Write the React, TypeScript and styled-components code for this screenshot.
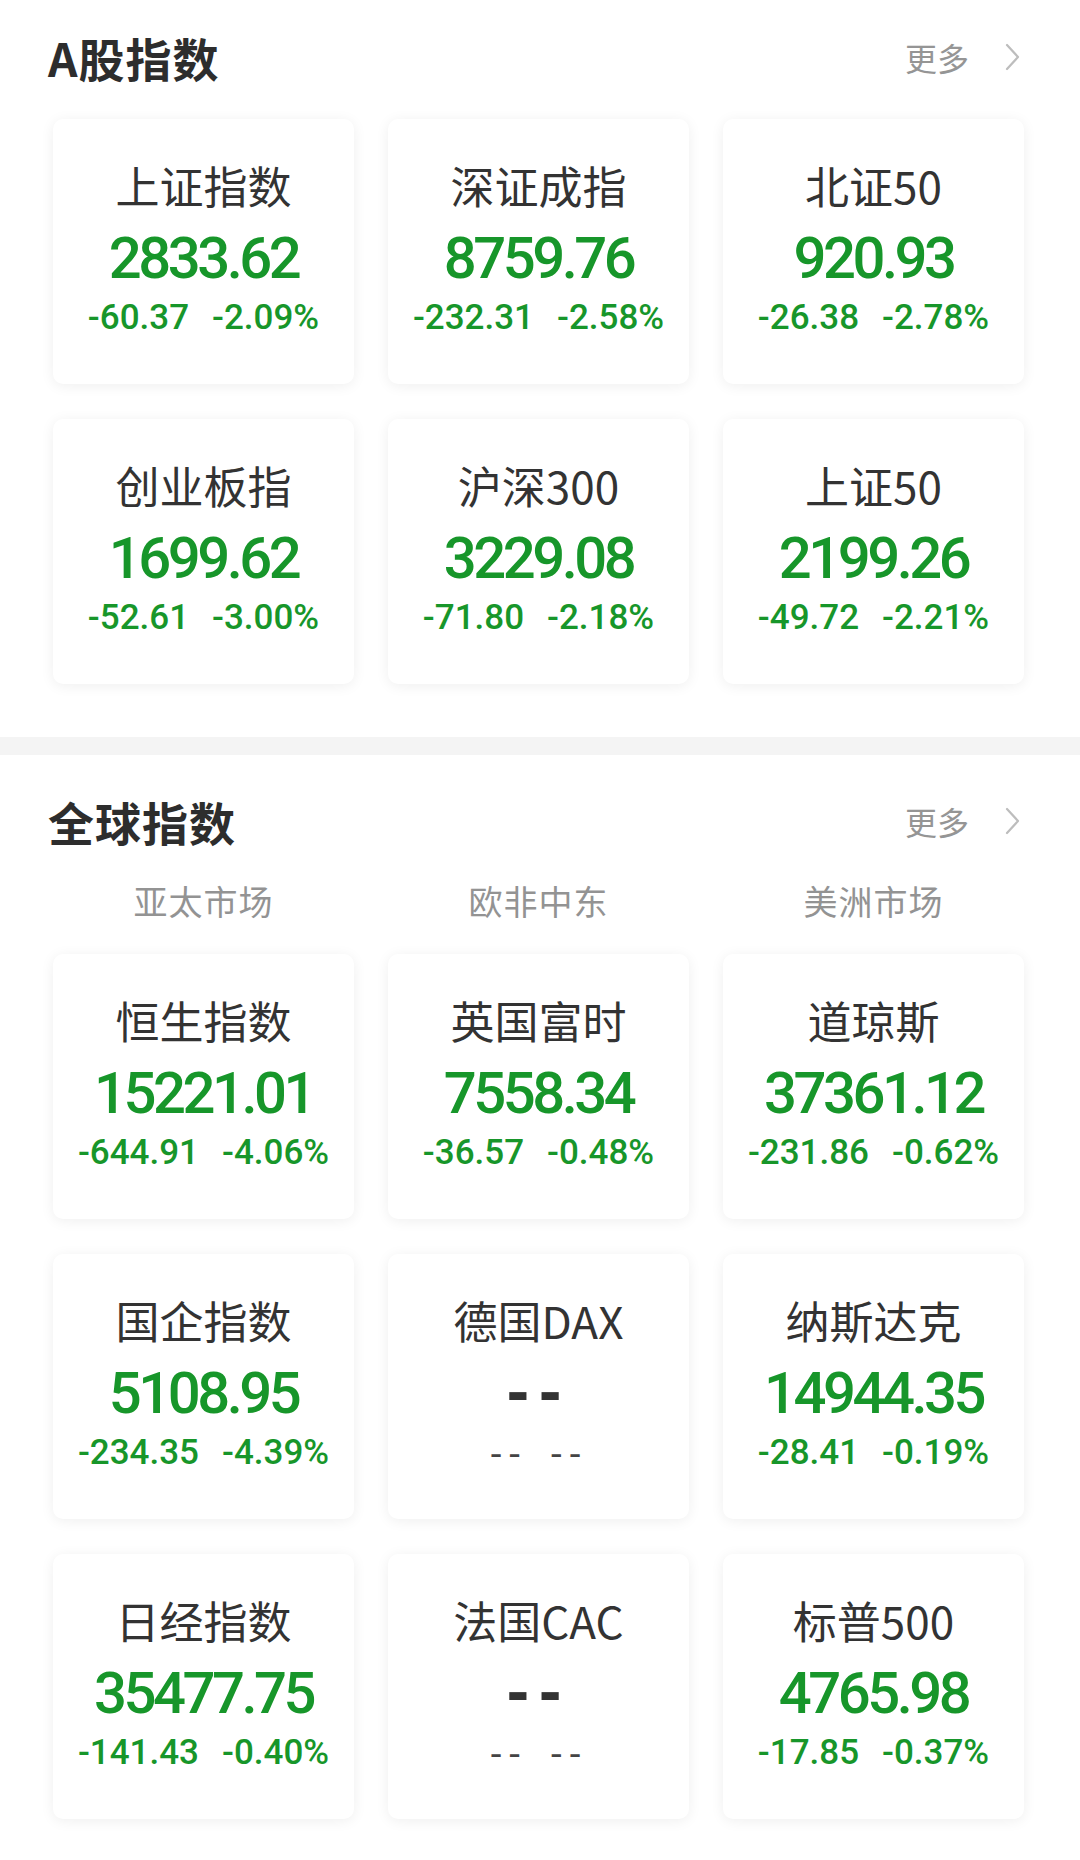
import React from 'react';
import styled, { createGlobalStyle } from 'styled-components';

const GlobalStyle = createGlobalStyle`
    html, body {
        margin: 0;
        padding: 0;
        background: #fff;
    }
    body {
        font-family: Roboto, "Noto Sans CJK SC", sans-serif;
        -webkit-font-smoothing: antialiased;
    }
`;

const Page = styled.div`
    width: 1080px;
    height: 1860px;
    background: #fff;
    overflow: hidden;
`;

const Section = styled.section<{ $top: number; $bottom: number }>`
    padding: ${(p) => p.$top}px 56px ${(p) => p.$bottom}px 53px;
`;

const Header = styled.div`
    display: flex;
    align-items: center;
    justify-content: space-between;
    height: 54px;
    margin: 0 3px 0 -5px;
`;

const Title = styled.h2`
    margin: 0;
    font-family: "Noto Sans CJK SC", sans-serif;
    font-size: 46px;
    line-height: 54px;
    font-weight: 700;
    color: #2d2d2d;
    letter-spacing: 1px;
`;

const More = styled.div`
    display: flex;
    align-items: center;
    gap: 36px;
    font-family: "Noto Sans CJK SC", sans-serif;
    font-size: 32px;
    color: #959595;
`;

const Divider = styled.div`
    height: 18px;
    background: #f4f4f4;
`;

const Tabs = styled.div`
    display: grid;
    grid-template-columns: repeat(3, 1fr);
    column-gap: 34px;
    margin-top: 33px;
`;

const Tab = styled.div`
    text-align: center;
    font-family: "Noto Sans CJK SC", sans-serif;
    font-size: 34px;
    line-height: 40px;
    color: #939393;
    letter-spacing: 1px;
`;

const Grid = styled.div<{ $mt: number }>`
    display: grid;
    grid-template-columns: repeat(3, 1fr);
    column-gap: 34px;
    row-gap: 35px;
    margin-top: ${(p) => p.$mt}px;
`;

const Card = styled.div`
    box-sizing: border-box;
    height: 265px;
    padding-top: 40px;
    background: #fff;
    border-radius: 10px;
    box-shadow: 0 2px 14px rgba(0, 0, 0, 0.065);
    display: flex;
    flex-direction: column;
    align-items: center;
`;

const Name = styled.div`
    font-family: "Noto Sans CJK SC", sans-serif;
    font-size: 44px;
    line-height: 52px;
    color: #333;
    white-space: nowrap;
`;

const Value = styled.div<{ $empty?: boolean }>`
    margin-top: 15px;
    font-family: ${(p) => (p.$empty ? '"DejaVu Sans", sans-serif' : 'Roboto, sans-serif')};
    font-size: ${(p) => (p.$empty ? '56px' : '58px')};
    line-height: 64px;
    font-weight: ${(p) => (p.$empty ? 700 : 500)};
    letter-spacing: ${(p) => (p.$empty ? '9px' : '-3.5px')};
    color: ${(p) => (p.$empty ? '#333' : '#17962a')};
    white-space: nowrap;
`;

const Change = styled.div<{ $empty?: boolean }>`
    margin-top: 8px;
    display: flex;
    gap: 23px;
    font-family: ${(p) => (p.$empty ? '"DejaVu Sans", sans-serif' : 'Roboto, sans-serif')};
    font-size: 35px;
    line-height: 40px;
    font-weight: ${(p) => (p.$empty ? 400 : 500)};
    letter-spacing: ${(p) => (p.$empty ? '6px' : '0')};
    color: ${(p) => (p.$empty ? '#444' : '#17962a')};
    white-space: nowrap;
`;

type Quote = { name: string; value?: string; diff?: string; pct?: string };

const aShares: Quote[] = [
    { name: '上证指数', value: '2833.62', diff: '-60.37', pct: '-2.09%' },
    { name: '深证成指', value: '8759.76', diff: '-232.31', pct: '-2.58%' },
    { name: '北证50', value: '920.93', diff: '-26.38', pct: '-2.78%' },
    { name: '创业板指', value: '1699.62', diff: '-52.61', pct: '-3.00%' },
    { name: '沪深300', value: '3229.08', diff: '-71.80', pct: '-2.18%' },
    { name: '上证50', value: '2199.26', diff: '-49.72', pct: '-2.21%' },
];

const globalIdx: Quote[] = [
    { name: '恒生指数', value: '15221.01', diff: '-644.91', pct: '-4.06%' },
    { name: '英国富时', value: '7558.34', diff: '-36.57', pct: '-0.48%' },
    { name: '道琼斯', value: '37361.12', diff: '-231.86', pct: '-0.62%' },
    { name: '国企指数', value: '5108.95', diff: '-234.35', pct: '-4.39%' },
    { name: '德国DAX' },
    { name: '纳斯达克', value: '14944.35', diff: '-28.41', pct: '-0.19%' },
    { name: '日经指数', value: '35477.75', diff: '-141.43', pct: '-0.40%' },
    { name: '法国CAC' },
    { name: '标普500', value: '4765.98', diff: '-17.85', pct: '-0.37%' },
];

const Chevron: React.FC = () => (
    <svg width="16" height="28" viewBox="0 0 16 28" fill="none">
        <polyline points="2,2 13,14 2,26" stroke="#bdbdbd" strokeWidth="2.2" strokeLinecap="round" strokeLinejoin="round" />
    </svg>
);

const SectionHeader: React.FC<{ title: string }> = ({ title }) => (
    <Header>
        <Title>{title}</Title>
        <More>
            更多
            <Chevron />
        </More>
    </Header>
);

const QuoteCard: React.FC<{ q: Quote }> = ({ q }) => {
    const empty = !q.value;
    return (
        <Card>
            <Name>{q.name}</Name>
            <Value $empty={empty}>{empty ? '--' : q.value}</Value>
            <Change $empty={empty}>
                <span>{empty ? '--' : q.diff}</span>
                <span>{empty ? '--' : q.pct}</span>
            </Change>
        </Card>
    );
};

export default function App() {
    return (
        <Page>
            <GlobalStyle />
            <Section $top={30} $bottom={53}>
                <SectionHeader title="A股指数" />
                <Grid $mt={35}>
                    {aShares.map((q) => (
                        <QuoteCard key={q.name} q={q} />
                    ))}
                </Grid>
            </Section>
            <Divider />
            <Section $top={39} $bottom={0}>
                <SectionHeader title="全球指数" />
                <Tabs>
                    <Tab>亚太市场</Tab>
                    <Tab>欧非中东</Tab>
                    <Tab>美洲市场</Tab>
                </Tabs>
                <Grid $mt={33}>
                    {globalIdx.map((q) => (
                        <QuoteCard key={q.name} q={q} />
                    ))}
                </Grid>
            </Section>
        </Page>
    );
}
